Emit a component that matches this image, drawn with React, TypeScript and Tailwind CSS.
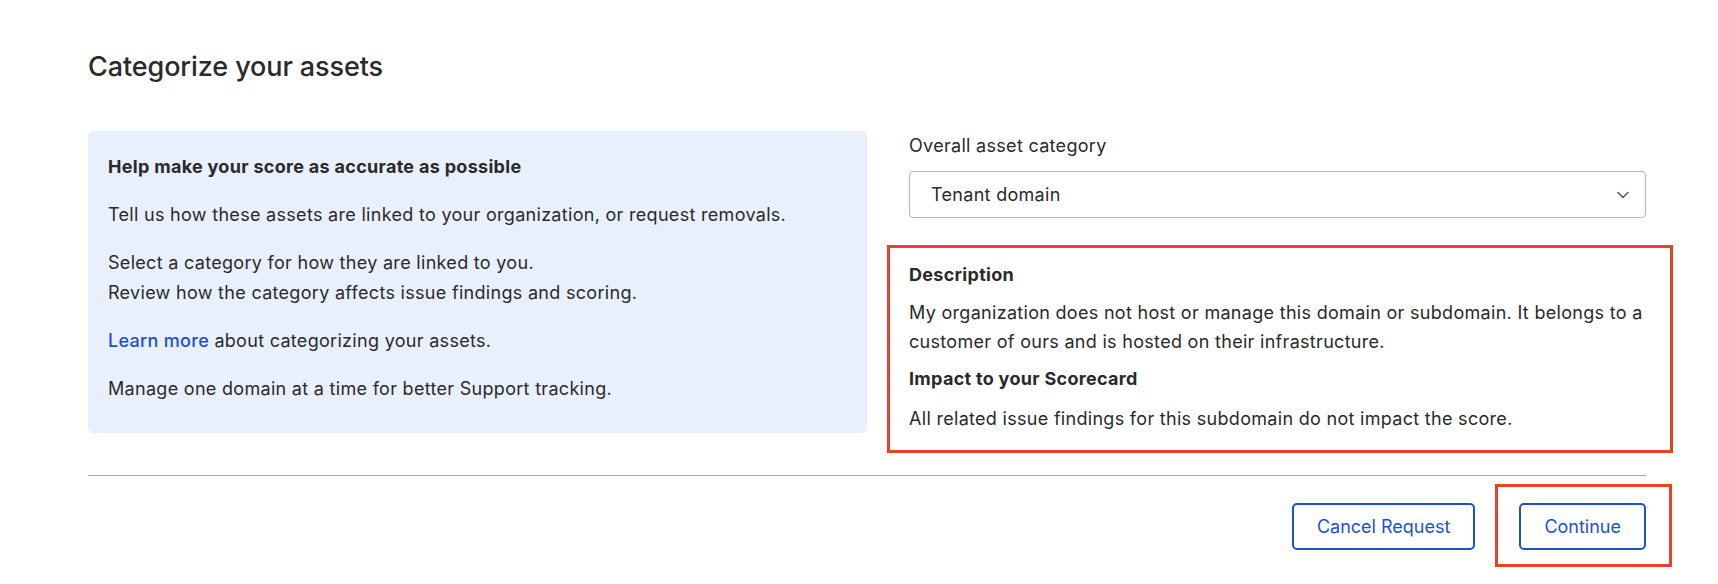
import React from "react";

const font = { fontFamily: "Inter, 'Noto Sans', sans-serif" };

function Chevron() {
  return (
    <svg width="12" height="8" viewBox="0 0 12 8" fill="none">
      <path d="M1 1.5 L6 6.5 L11 1.5" stroke="#5a5a5a" strokeWidth="1.6" strokeLinecap="round" strokeLinejoin="round" />
    </svg>
  );
}

export default function App() {
  return (
    <div className="w-[1718px] h-[584px] bg-white text-[#2a2a2a]" style={font}>
      <div className="ml-[88px] w-[1558px] pt-[49px]">
        <h1 className="text-[27px] leading-[36px] font-medium tracking-[-0.1px]">Categorize your assets</h1>

        <div className="mt-[46px] grid grid-cols-[779px_737px] gap-x-[42px]">
          {/* guidance panel */}
          <div className="bg-[#e9f0fd] rounded-[5px] pl-[20px] pr-5 pt-[21px] pb-[28px] text-[18px] tracking-[0.3px] leading-[30px] flex flex-col gap-[18px] h-[302px]">
            <p className="font-bold">Help make your score as accurate as possible</p>
            <p>Tell us how these assets are linked to your organization, or request removals.</p>
            <p>
              Select a category for how they are linked to you.
              <br />
              Review how the category affects issue findings and scoring.
            </p>
            <p>
              <a className="text-[#1c4fd1] font-medium">Learn more</a> about categorizing your assets.
            </p>
            <p>Manage one domain at a time for better Support tracking.</p>
          </div>

          {/* category selection */}
          <div className="text-[18px] tracking-[0.3px] leading-[30px]">
            <label className="block">Overall asset category</label>
            <div className="mt-[10px] h-[47px] border border-[#b5b5b5] rounded-[4px] flex items-center justify-between pl-[21px] pr-[16px]">
              <span>Tenant domain</span>
              <Chevron />
            </div>

            <div className="relative mt-[42px]">
              <div className="absolute -left-[22px] -right-[27px] -top-[15px] -bottom-[19px] border-[3px] border-[#e8412c] pointer-events-none" />
              <p className="font-bold">Description</p>
              <p className="mt-[8px] leading-[29px] -mr-[14px]">
                My organization does not host or manage this domain or subdomain. It belongs to a customer of ours and is hosted on their infrastructure.
              </p>
              <p className="mt-[8px] font-bold">Impact to your Scorecard</p>
              <p className="mt-[10px]">All related issue findings for this subdomain do not impact the score.</p>
            </div>
          </div>
        </div>

        <div className="mt-[41px] h-px bg-[#a6a6a6]" />

        <div className="mt-[27px] flex justify-end gap-[44px]">
          <button className="h-[47px] px-[23px] border-2 border-[#1d50cf] rounded-[5px] text-[#1d50cf] text-[18px]">Cancel Request</button>
          <div className="relative">
            <div className="absolute -left-[24px] -right-[26px] -top-[19px] -bottom-[17px] border-[3px] border-[#e8412c] pointer-events-none" />
            <button className="h-[47px] px-[23px] border-2 border-[#1d50cf] rounded-[5px] text-[#1d50cf] text-[18px]">Continue</button>
          </div>
        </div>
      </div>
    </div>
  );
}
